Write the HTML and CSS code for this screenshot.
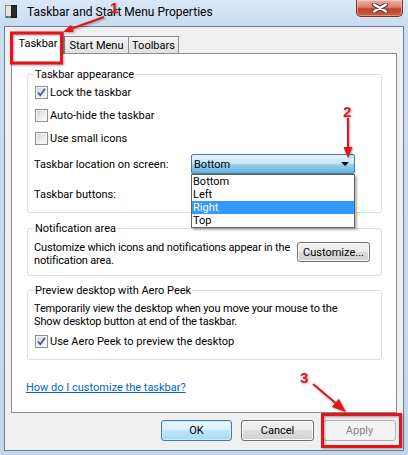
FILE: index.html
```html
<!DOCTYPE html>
<html lang="en">
<head>
  <meta charset="UTF-8">
  <meta name="viewport" content="width=device-width, initial-scale=1.0">
  <title>Taskbar and Start Menu Properties</title>
  <link rel="stylesheet" href="styles.css">
</head>
<body>
  <div class="window">
    <div class="titlebar">
      <svg class="app-icon" width="13" height="14" viewBox="0 0 13 14">
        <rect x="0.5" y="0.5" width="6" height="12" fill="#e4e4e4" stroke="#8a8a8a"/>
        <rect x="6.5" y="0.5" width="5" height="12" fill="#2b2b2b" stroke="#1a1a1a"/>
        <rect x="1" y="11" width="2" height="2" fill="#2f6fd0"/>
        <rect x="3" y="11" width="2" height="2" fill="#3aa646"/>
        <rect x="5" y="11" width="1" height="2" fill="#d23a2a"/>
      </svg>
      <span class="title">Taskbar and Start Menu Properties</span>
      <div class="close-btn">
        <svg width="18" height="10" viewBox="0 0 18 10">
          <path d="M3 1.5 L15 8.5 M15 1.5 L3 8.5" stroke="#5a3a36" stroke-width="4.4" stroke-linecap="round"/>
          <path d="M3 1.5 L15 8.5 M15 1.5 L3 8.5" stroke="#ffffff" stroke-width="2.4" stroke-linecap="round"/>
        </svg>
      </div>
    </div>

    <div class="client">
      <div class="tabs">
        <div class="tab selected">Taskbar</div>
        <div class="tab tab-start">Start Menu</div>
        <div class="tab tab-toolbars">Toolbars</div>
      </div>

      <div class="panel">
        <fieldset class="group group-appearance">
          <legend>Taskbar appearance</legend>
          <div class="check-row"><span class="checkbox checked"></span>Lock the taskbar</div>
          <div class="check-row"><span class="checkbox"></span>Auto-hide the taskbar</div>
          <div class="check-row"><span class="checkbox"></span>Use small icons</div>
          <div class="field-row location-row">
            <span class="field-label">Taskbar location on screen:</span>
            <div class="combo">
              <span class="combo-value">Bottom</span>
              <span class="combo-arrow"></span>
              <ul class="combo-list">
                <li>Bottom</li>
                <li>Left</li>
                <li class="highlighted">Right</li>
                <li>Top</li>
              </ul>
            </div>
          </div>
          <div class="field-row buttons-row">
            <span class="field-label">Taskbar buttons:</span>
          </div>
        </fieldset>

        <fieldset class="group group-notify">
          <legend>Notification area</legend>
          <div class="notify-row">
            <p class="group-text">Customize which icons and notifications appear in the<br>notification area.</p>
            <button class="btn btn-customize">Customize...</button>
          </div>
        </fieldset>

        <fieldset class="group group-peek">
          <legend>Preview desktop with Aero Peek</legend>
          <p class="group-text">Temporarily view the desktop when you move your mouse to the<br>Show desktop button at end of the taskbar.</p>
          <div class="check-row peek-check"><span class="checkbox checked"></span>Use Aero Peek to preview the desktop</div>
        </fieldset>

        <a class="help-link" href="#">How do I customize the taskbar?</a>
      </div>

      <div class="dialog-buttons">
        <button class="btn btn-default btn-ok">OK</button>
        <button class="btn btn-cancel">Cancel</button>
        <button class="btn btn-disabled btn-apply">Apply</button>
      </div>
    </div>

    <!-- tutorial markup drawn over the dialog -->
    <svg class="annotations" width="408" height="455" viewBox="0 0 408 455">
      <g class="marks">
        <rect x="11.5" y="33" width="50" height="30" fill="none" stroke="#e3151b" stroke-width="3"/>
        <rect x="322.5" y="414.5" width="78" height="32" fill="none" stroke="#e3151b" stroke-width="3"/>
        <line x1="104" y1="17" x2="72" y2="28.5" stroke="#e3151b" stroke-width="2"/>
        <polygon points="63,32 73.7,32.1 70.9,24.7" fill="#e3151b"/>
        <line x1="348" y1="118" x2="348" y2="148" stroke="#e3151b" stroke-width="2"/>
        <polygon points="348,158 343.5,147 352.5,147" fill="#e3151b"/>
        <line x1="313" y1="384" x2="335.5" y2="403" stroke="#e3151b" stroke-width="2"/>
        <polygon points="346,412 331.8,407 338.8,398.8" fill="#e3151b"/>
        <text class="mark-num" x="110" y="13">1</text>
        <text class="mark-num" x="343" y="117">2</text>
        <text class="mark-num" x="300" y="383">3</text>
      </g>
    </svg>
  </div>
</body>
</html>
```

FILE: styles.css
```css
body {
  margin: 0;
  font-family: Roboto, "Liberation Sans", Arial, sans-serif;
  font-size: 11px;
  color: #000;
  background-color: #c3d9f1;
}
.window {
  position: relative;
  width: 408px;
  height: 455px;
  overflow: hidden;
  background: linear-gradient(#dae8f7 0px, #c9dcf2 26px, #c1d7f0 100%);
}

/* title bar */
.titlebar {
  display: flex;
  align-items: flex-start;
  height: 26px;
}
.app-icon {
  margin: 5px 9px 0 5px;
}
.title {
  font-size: 12px;
  line-height: 14px;
  margin-top: 5px;
  color: #000;
}
.close-btn {
  margin-left: auto;
  margin-right: 5px;
  width: 47px;
  height: 17px;
  box-sizing: border-box;
  border: 1px solid #7d3126;
  border-top: none;
  border-radius: 0 0 5px 5px;
  background: linear-gradient(#eab3a5 0%, #d9806b 45%, #c4432b 55%, #cf5e3e 100%);
  box-shadow: inset 0 0 0 1px rgba(255, 255, 255, 0.35);
  display: flex;
  align-items: center;
  justify-content: center;
}

/* client area */
.client {
  margin: 0 4px;
  height: 425px;
  box-sizing: border-box;
  border: 1px solid #6e7f93;
  background-color: #f0f0f0;
  padding-top: 5px;
}
.tabs {
  display: flex;
  align-items: flex-end;
  padding-left: 7px;
}
.tab {
  height: 17px;
  box-sizing: border-box;
  border: 1px solid #898c95;
  border-bottom: none;
  background: linear-gradient(#f3f3f3, #e1e1e1);
  text-align: center;
  line-height: 17px;
  font-size: 11px;
}
.tab.selected {
  position: relative;
  z-index: 1;
  width: 52px;
  height: 22px;
  margin-bottom: -1px;
  line-height: 22px;
  background: #fff;
}
.tab-start {
  width: 65px;
}
.tab-toolbars {
  width: 51px;
  margin-left: -1px;
}
.panel {
  margin: 0 6px;
  height: 360px;
  box-sizing: border-box;
  border: 1px solid #898c95;
  background-color: #fff;
  padding: 14px 14px 0 15px;
}

/* group boxes */
.group {
  margin: 0;
  min-width: 0;
  border: 1px solid #d5dfe5;
  border-radius: 3px;
  padding: 0 10px 6px 6px;
}
.group legend {
  padding: 0 1px;
  line-height: 13px;
}
.group-notify {
  margin-top: 9px;
  padding-bottom: 8px;
}
.group-peek {
  margin-top: 8px;
}
.group-text {
  margin: 0;
  line-height: 13px;
  white-space: nowrap;
  letter-spacing: -0.15px;
}
.group-notify .group-text {
  padding-top: 6px;
}
.group-peek .group-text {
  padding-top: 5px;
}
.check-row {
  display: flex;
  align-items: center;
  height: 23px;
  padding-left: 1px;
}
.peek-check {
  margin-top: 2px;
}
.checkbox {
  width: 13px;
  height: 13px;
  box-sizing: border-box;
  margin-right: 2px;
  border: 1px solid #8e8f8f;
  background: linear-gradient(135deg, #cdd1d6 0%, #eeeff0 60%, #ffffff 100%);
  box-shadow: inset 0 0 0 1px #f6f6f6;
}
.checkbox.checked {
  background:
    url("data:image/svg+xml;utf8,<svg xmlns='http://www.w3.org/2000/svg' width='11' height='11' viewBox='0 0 11 11'><path d='M2 5.5 L4.3 8.3 L9 1.8' fill='none' stroke='%234a5f92' stroke-width='1.9'/></svg>") center no-repeat,
    linear-gradient(135deg, #cdd1d6 0%, #eeeff0 60%, #ffffff 100%);
}
.field-row {
  display: flex;
  align-items: center;
}
.location-row {
  margin-top: 4px;
  height: 20px;
}
.buttons-row {
  margin-top: 9px;
  height: 23px;
}
.field-label {
  width: 157px;
  flex-shrink: 0;
}

/* open combo box */
.combo {
  position: relative;
  width: 164px;
  height: 20px;
  box-sizing: border-box;
  border: 1px solid #3c7fb1;
  border-radius: 2px;
  background: linear-gradient(#e5f4fc 0%, #c4e5f6 50%, #98d1ef 50%, #68b3db 100%);
  display: flex;
  align-items: center;
  padding-left: 2px;
}
.combo-arrow {
  margin-left: auto;
  margin-right: 5px;
  width: 0;
  height: 0;
  border-left: 4px solid transparent;
  border-right: 4px solid transparent;
  border-top: 4px solid #000;
}
.combo-list {
  position: absolute;
  top: 19px;
  left: -1px;
  z-index: 5;
  width: 164px;
  margin: 0;
  padding: 0;
  list-style: none;
  box-sizing: border-box;
  border: 1px solid #646464;
  background: #fff;
  box-shadow: 2px 2px 2px rgba(0, 0, 0, 0.3);
}
.combo-list li {
  height: 13px;
  line-height: 13px;
  padding: 0 1px;
}
.combo-list li.highlighted {
  background-color: #3399ff;
  color: #fff;
}

/* buttons */
.btn {
  font-family: inherit;
  font-size: 11px;
  color: #000;
  height: 21px;
  padding: 0;
  box-sizing: border-box;
  border: 1px solid #707070;
  border-radius: 3px;
  background: linear-gradient(#f2f2f2 0%, #ebebeb 50%, #dddddd 50%, #cfcfcf 100%);
  box-shadow: inset 0 0 0 1px #fcfcfc;
}
.btn-default {
  border-color: #3c7fb1;
  background: linear-gradient(#eaf6fd 0%, #d9f0fc 50%, #bee6fd 50%, #a7d9f5 100%);
  box-shadow: inset 0 0 0 1px #cde9f9;
}
.btn-disabled {
  color: #838383;
  border-color: #adb2b5;
  background: #f4f4f4;
  box-shadow: none;
}
.notify-row {
  display: flex;
  align-items: flex-start;
  justify-content: space-between;
}
.btn-customize {
  width: 73px;
  height: 20px;
  margin-top: 7px;
  margin-right: 1px;
}
.help-link {
  display: block;
  width: max-content;
  margin: 21px 0 0 -1px;
  line-height: 13px;
  color: #0066cc;
  text-decoration: underline;
}
.dialog-buttons {
  display: flex;
  justify-content: flex-end;
  gap: 9px;
  margin-top: 7px;
  padding-right: 7px;
}
.btn-ok {
  width: 71px;
}
.btn-cancel,
.btn-apply {
  width: 73px;
}

/* annotation layer */
.annotations {
  position: absolute;
  top: 0;
  left: 0;
  z-index: 10;
  pointer-events: none;
}
.marks {
  filter: drop-shadow(1px 1px 1px rgba(0, 0, 0, 0.35));
}
.mark-num {
  font-family: "Liberation Sans", Arial, sans-serif;
  font-weight: bold;
  font-size: 15px;
  fill: #e3151b;
}
```
